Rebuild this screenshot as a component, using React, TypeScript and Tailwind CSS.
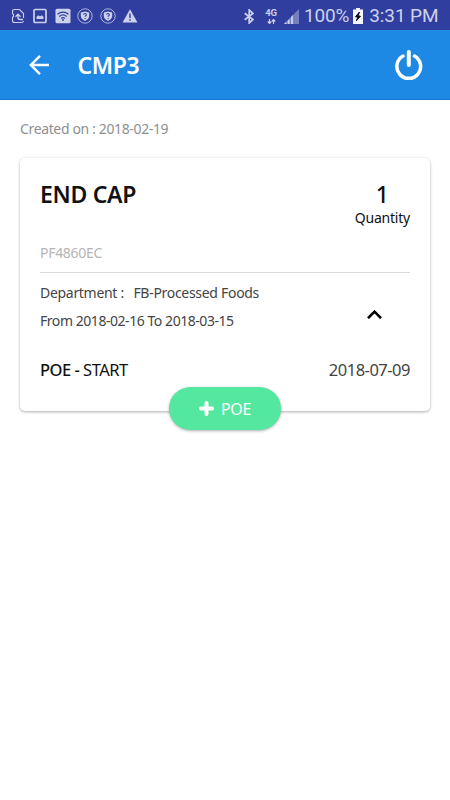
import type { ReactNode } from "react";

const job = {
  title: "CMP3",
  createdOn: "2018-02-19",
  name: "END CAP",
  quantity: 1,
  code: "PF4860EC",
  department: "FB-Processed Foods",
  from: "2018-02-16",
  to: "2018-03-15",
  poeDate: "2018-07-09",
};

function StatusIcon({ children }: { children: ReactNode }) {
  return (
    <svg className="h-4 w-4 shrink-0" viewBox="0 0 16 16" fill="none">
      {children}
    </svg>
  );
}

function ShieldIcon() {
  return (
    <StatusIcon>
      <circle cx="8" cy="8" r="7.2" stroke="currentColor" strokeWidth="0.8" />
      <path d="M8 3.4 12.2 4.6v3.2c0 2.5-1.9 4.3-4.2 5.2-2.3-.9-4.2-2.7-4.2-5.2V4.6Z" fill="currentColor" />
      <path d="M6.7 6.8c0-1.7 2.7-1.7 2.7 0 0 1-1.3.9-1.3 2M8.1 9.9v1" stroke="#303f9f" strokeWidth="1.1" />
    </StatusIcon>
  );
}

function StatusBar() {
  return (
    <div className="flex h-[30px] items-center justify-between bg-[#303f9f] pr-[11.5px] pl-[10px] font-['Roboto',sans-serif] text-[#cdd0ea]">
      <div className="flex items-center gap-[6.4px] pt-px">
        <StatusIcon>
          <path d="M13.5 10V5.5L9.5 1.5H4.5c-1.3 0-2 .7-2 2v2l1 1v2l-1 1v3c0 1.3.7 2 2 2h7c1.2 0 1.8-.5 2-1.5" stroke="currentColor" strokeWidth="1.1" />
          <path d="M13 11.5H10c-1.300 0-2-.7-2-2V6.500M5.500 8.700 8 6.200 10.500 8.700" stroke="currentColor" strokeWidth="1.4" />
        </StatusIcon>
        <StatusIcon>
          <rect x="2" y="1.5" width="12" height="13" rx="1" stroke="currentColor" strokeWidth="1.7" />
          <path d="M4.500 11V9l1.700-1.700 1.800 1.200 1.800-1.200L11.500 9V11Z" fill="currentColor" />
        </StatusIcon>
        <StatusIcon>
          <rect x="0.5" y="0.7" width="15" height="14.6" rx="1.5" fill="currentColor" />
          <path d="M2.5 6.300c3.200-2.800 7.800-2.800 11 0M4.300 8.500c2.200-1.900 5.200-1.900 7.400 0M6.100 10.500c1.200-1 2.600-1 3.800 0" stroke="#303f9f" strokeWidth="1.2" />
          <circle cx="8" cy="12" r="0.9" fill="#303f9f" />
        </StatusIcon>
        <ShieldIcon />
        <ShieldIcon />
        <StatusIcon>
          <path d="M8 1.2 15.5 14.500H.5Z" fill="currentColor" />
          <path d="M8 5.500v4.500M8 11.300v1.500" stroke="#303f9f" strokeWidth="1.4" />
        </StatusIcon>
      </div>

      <div className="flex items-center pt-[2px]">
        <svg className="mr-[10.5px] h-[15px] w-[10px]" viewBox="0 0 10 15" fill="none">
          <path d="M.7 4.2 9 10.5 5.2 14V1L9 4.5.7 10.8" stroke="currentColor" strokeWidth="1.7" />
        </svg>
        <div className="mr-[6px] flex w-[13px] flex-col items-center text-[9.5px] leading-[9px] font-bold">
          <span>4G</span>
          <svg className="mt-[2px] h-[5px] w-[9px]" viewBox="0 0 9 5" fill="none">
            <path d="M2.5 0v4M.8 2.500l1.700 2 1.700-2M6.500 5V1M4.800 2.500l1.700-2 1.700 2" stroke="currentColor" strokeWidth="1.2" />
          </svg>
        </div>
        <svg className="mr-[5.5px] h-[15px] w-[15px]" viewBox="0 0 16 16">
          <path d="M16 0v16H0Z" fill="#7480c0" />
          <path d="M0 16l2.500-2.500V16ZM4 12.500l2-2V16H4ZM7.500 8.500l2-2V16h-2Z" fill="currentColor" />
        </svg>
        <span className="text-[19px] leading-[28px] tracking-[-0.2px]">100%</span>
        <svg className="mr-[6px] ml-[4px] h-[16px] w-[10px]" viewBox="0 0 10 16">
          <path d="M3 0h4v1.500h3V16H0V1.500h3Z" fill="#f4f5ff" />
          <path d="M6.500 4 2.500 8.700l2.300.5L3.300 12.800 7.500 8.300 5.200 7.700Z" fill="#101010" stroke="#101010" />
        </svg>
        <span className="text-[19px] leading-[28px] tracking-[-0.1px]">3:31 PM</span>
      </div>
    </div>
  );
}

function Header() {
  return (
    <header className="flex h-[70px] items-center border-b border-[#1878cf] bg-[#1e88e5] pr-[27.5px] pl-[29px] text-white">
      <svg className="h-5 w-5" viewBox="0 0 20 20" fill="none" stroke="currentColor" strokeWidth="2.4">
        <path d="M20 10H1.800M11 .8 1.800 10 11 19.200" />
      </svg>
      <h1 className="ml-[28.5px] text-[23px] leading-[30px] font-semibold tracking-[-0.4px]">{job.title}</h1>
      <svg className="ml-auto h-[30px] w-[28px]" viewBox="0 0 28 30" fill="none" stroke="currentColor" strokeLinecap="round">
        <path d="M8 6A11.900 11.900 0 1 0 19.500 6" strokeWidth="3.5" />
        <path d="M13.800 2v13" strokeWidth="4" />
      </svg>
    </header>
  );
}

function JobCard() {
  return (
    <section className="relative mx-5 h-[253px] rounded-[5px] bg-white px-5 shadow-[0_1px_3px_rgba(0,0,0,0.32)]">
      <div className="flex justify-between pt-[21px]">
        <h2 className="text-[23px] leading-[30px] font-semibold tracking-[-0.3px] text-[#111]">{job.name}</h2>
        <div className="flex flex-col items-center text-[#111]">
          <span className="text-[23px] leading-[30px] font-medium">{job.quantity}</span>
          <span className="text-[14px] leading-[18px] tracking-[-0.22px]">Quantity</span>
        </div>
      </div>
      <p className="mt-[16px] text-[14px] leading-5 tracking-[-0.3px] text-[#b5b5b5]">{job.code}</p>
      <hr className="mt-[9px] border-[#d9d9d9]" />
      <div className="flex justify-between text-[14px] leading-[28px] text-[#444]">
        <div className="pt-[6px]">
          <p className="tracking-[-0.3px]">
            Department :<span className="ml-[9.5px] tracking-[-0.3px]">{job.department}</span>
          </p>
          <p className="tracking-[-0.45px]">
            From {job.from} To {job.to}
          </p>
        </div>
        <svg className="mt-[37px] mr-[28px] h-[9px] w-[15px]" viewBox="0 0 15 9" fill="none">
          <path d="M1 8.200 7.500 1.700 14 8.200" stroke="#000" strokeWidth="2.6" />
        </svg>
      </div>
      <div className="mt-[23px] flex justify-between text-[16.5px] leading-6 tracking-[-0.5px]">
        <p className="text-[#111]">
          <span className="font-medium">POE -</span> START
        </p>
        <p className="text-[#444]">{job.poeDate}</p>
      </div>

      <button className="absolute top-[229px] left-[149px] flex h-[43px] w-[112px] items-center rounded-full bg-[#54e79f] pl-[30px] text-white shadow-[0_1px_3px_rgba(0,0,0,0.32)]">
        <svg className="h-[15px] w-[15px]" viewBox="0 0 15 15" stroke="currentColor" strokeWidth="4" strokeLinecap="round">
          <path d="M7.500 2v11M2 7.500h11" />
        </svg>
        <span className="ml-[7px] text-[16px] leading-6 tracking-[-0.4px]">POE</span>
      </button>
    </section>
  );
}

export default function App() {
  return (
    <div className="h-[800px] w-[450px] overflow-hidden bg-white font-['Noto_Sans',sans-serif]">
      <StatusBar />
      <Header />
      <p className="px-5 pt-[19px] pb-[19px] text-[14px] leading-5 tracking-[-0.36px] text-[#8f8f8f]">
        Created on : {job.createdOn}
      </p>
      <JobCard />
    </div>
  );
}
